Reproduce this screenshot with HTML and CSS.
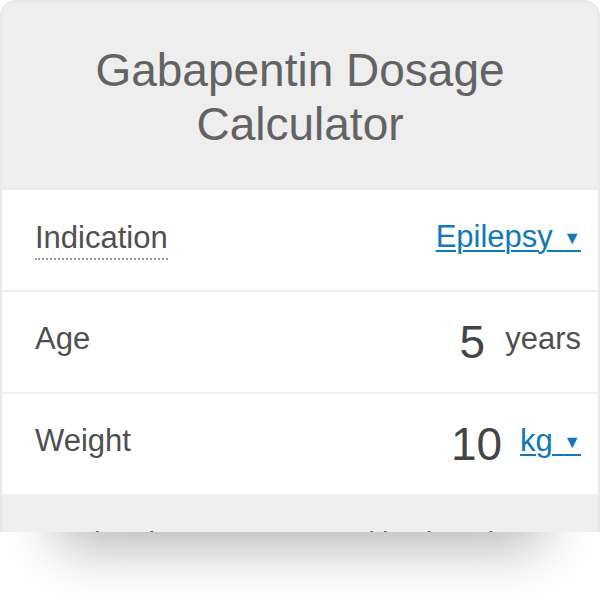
FILE: index.html
```
<!DOCTYPE html>
<html lang="en">
<head>
<meta charset="utf-8">
<title>Gabapentin Dosage Calculator</title>
<link rel="stylesheet" href="styles.css">
</head>
<body>
<div class="widget">
  <div class="card">
    <header class="head">
      <h1 class="title">Gabapentin Dosage<br>Calculator</h1>
    </header>
    <div class="row">
      <span class="label label-info">Indication</span>
      <a class="select" href="#">Epilepsy&#8196;<span class="caret">▼</span></a>
    </div>
    <div class="row">
      <span class="label">Age</span>
      <span class="value"><span class="num">5</span><span class="unit">years</span></span>
    </div>
    <div class="row">
      <span class="label">Weight</span>
      <span class="value"><span class="num">10</span><a class="select unit-link" href="#">kg&#8196;<span class="caret">▼</span></a></span>
    </div>
    <div class="result">
      <p class="result-text">Starting dose: 100-150 mg/day in 3 doses</p>
    </div>
  </div>
  <div class="shadow"></div>
</div>
</body>
</html>
```
FILE: styles.css
```
* { box-sizing: border-box; }
html, body { margin: 0; padding: 0; background: #ffffff; }
body { font-family: "Liberation Sans", Arial, sans-serif; }

.widget { width: 600px; }

.card {
  height: 532px;
  overflow: hidden;
  background: #eeeeee;
  border: 2px solid #e8e8e8;
  border-bottom: 0;
  border-radius: 16px 16px 0 0;
  display: flex;
  flex-direction: column;
}

.head {
  height: 188px;
  flex: none;
  padding-top: 41px;
  background: #eeeeee;
}
.title {
  margin: 0;
  text-align: center;
  font-weight: normal;
  font-size: 46px;
  line-height: 54px;
  color: #636363;
}

.row {
  height: 102px;
  flex: none;
  background: #ffffff;
  border-bottom: 2px solid #efefef;
  display: flex;
  align-items: center;
  justify-content: space-between;
  padding: 0 17px 0 33px;
}

.label {
  font-size: 31px;
  line-height: 34px;
  color: #4f4f4f;
  margin-bottom: 6px;
}
.label-info {
  display: inline-block;
  border-bottom: 2px dotted #9a9a9a;
  padding-bottom: 3px;
  margin-bottom: 0;
}

.select {
  font-size: 31px;
  line-height: 34px;
  color: #107ab6;
  text-decoration: underline;
  text-decoration-thickness: 2px;
  text-underline-offset: 3px;
  margin-bottom: 6px;
  white-space: nowrap;
}
.caret {
  font-size: 18px;
  vertical-align: 3px;
}

.value {
  display: flex;
  align-items: center;
}
.num {
  font-size: 46px;
  color: #444444;
}
.unit {
  font-size: 31px;
  line-height: 34px;
  color: #4f4f4f;
  margin-left: 20px;
  margin-bottom: 6px;
}
.unit-link { margin-left: 18px; }

.result {
  flex: 1;
  background: #efefef;
  padding: 30px 33px 0;
}
.result-text {
  margin: 0;
  font-size: 28px;
  color: #555555;
  white-space: nowrap;
}

.shadow {
  height: 68px;
  position: relative;
  overflow: hidden;
}
.shadow::before {
  content: "";
  position: absolute;
  left: 70px;
  right: 70px;
  top: -60px;
  height: 60px;
  box-shadow: 0 0 60px 12px rgba(0, 0, 0, 0.32);
}
```
